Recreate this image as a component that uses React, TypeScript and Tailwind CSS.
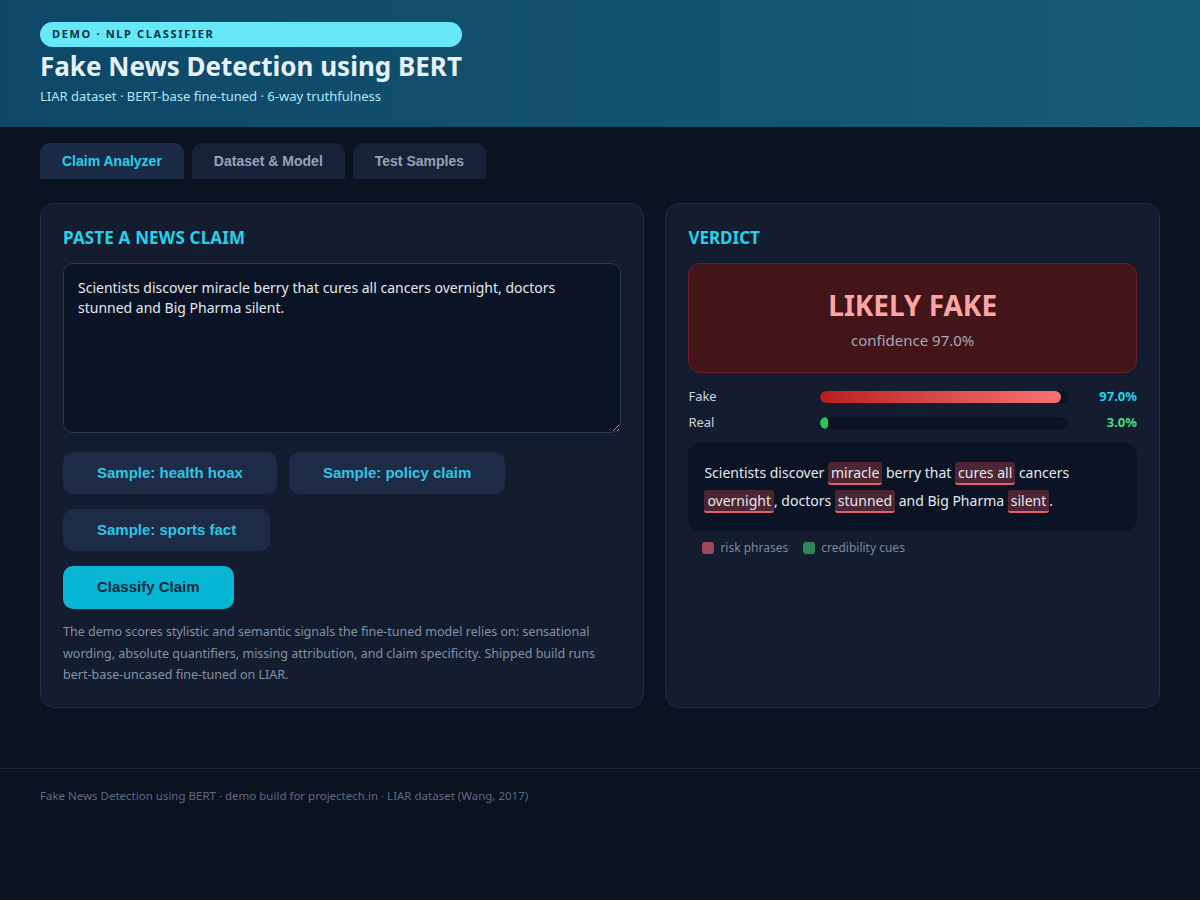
import React, { useState } from 'react';

type Segment = { text: string; risk?: boolean };

const claimText =
    'Scientists discover miracle berry that cures all cancers overnight, doctors stunned and Big Pharma silent.';

const highlighted: Segment[] = [
    { text: 'Scientists discover ' },
    { text: 'miracle', risk: true },
    { text: ' berry that ' },
    { text: 'cures all', risk: true },
    { text: ' cancers ' },
    { text: 'overnight', risk: true },
    { text: ', doctors ' },
    { text: 'stunned', risk: true },
    { text: ' and Big Pharma ' },
    { text: 'silent', risk: true },
    { text: '.' },
];

const tabs = ['Claim Analyzer', 'Dataset & Model', 'Test Samples'];
const samples = ['Sample: health hoax', 'Sample: policy claim', 'Sample: sports fact'];

const ScoreBar: React.FC<{ label: string; value: number; fill: string; pctColor: string }> = ({ label, value, fill, pctColor }) => (
    <div className="flex items-center h-[26px]">
        <div className="w-[132px] text-[13px] text-[#cbd5e1]">{label}</div>
        <div className="flex-1 h-3 rounded-full bg-[#0b1424] overflow-hidden">
            <div className={`h-full rounded-full ${fill}`} style={{ width: `${value}%` }} />
        </div>
        <div className={`w-[69px] text-right text-[13px] font-bold ${pctColor}`}>{value.toFixed(1)}%</div>
    </div>
);

export default function App() {
    const [active, setActive] = useState(0);
    const [claim, setClaim] = useState(claimText);

    return (
        <div className="min-h-[900px] bg-[#0b1220] font-['Noto_Sans',sans-serif] text-[#e2e8f0]">
            {/* header banner */}
            <header className="h-[127px] bg-gradient-to-r from-[#0e4767] to-[#175c76] px-10 pt-[22px] flex items-start">
                <div className="flex flex-col">
                    <div className="h-[25px] rounded-full bg-[#67e8f9] px-3 flex items-center text-[11px] font-bold tracking-[0.15em] text-[#0c2f40]">
                        DEMO · NLP CLASSIFIER
                    </div>
                    <h1 className="mt-[2px] text-[26px] leading-[34px] font-bold text-[#e6f1f7]">Fake News Detection using BERT</h1>
                    <p className="mt-[3px] text-[13px] leading-5 text-[#b3e5f5]">LIAR dataset · BERT-base fine-tuned · 6-way truthfulness</p>
                </div>
            </header>

            <main className="px-10 pt-4 pb-[60px]">
                {/* tabs */}
                <div className="flex gap-2">
                    {tabs.map((t, i) => (
                        <button
                            key={t}
                            onClick={() => setActive(i)}
                            className={`h-9 px-[22px] rounded-t-[10px] font-['Liberation_Sans',sans-serif] text-[14px] font-bold ${
                                i === active ? 'bg-[#1c2b45] text-[#22d3ee]' : 'bg-[#172238] text-[#94a3b8]'
                            }`}
                        >
                            {t}
                        </button>
                    ))}
                </div>

                <div className="mt-6 grid grid-cols-[1.222fr_1fr] gap-[21px]">
                    {/* claim input */}
                    <section className="rounded-[14px] border border-[#1f2c44] bg-[#131d2f] px-[22px] pt-[22px] pb-[21px]">
                        <h2 className="text-[17px] tracking-[0.01em] font-bold uppercase text-[#22d3ee] leading-6">Paste a news claim</h2>
                        <textarea
                            value={claim}
                            onChange={e => setClaim(e.target.value)}
                            className="mt-[13px] block w-full h-[170px] rounded-[10px] border border-[#2a3a57] bg-[#0b1424] px-[14px] pt-[14px] pb-[12px] text-[14px] leading-5 text-[#e2e8f0] outline-none"
                        />
                        <div className="mt-[19px] flex flex-wrap gap-x-[12px] gap-y-[15px]">
                            {samples.map(s => (
                                <button
                                    key={s}
                                    className="h-[42px] px-[34px] rounded-[10px] bg-[#1e2b46] font-['Liberation_Sans',sans-serif] text-[15px] font-bold text-[#2cc6e3]"
                                >
                                    {s}
                                </button>
                            ))}
                        </div>
                        <button className="mt-[15px] h-[43px] px-[34px] rounded-[10px] bg-[#06b6d4] font-['Liberation_Sans',sans-serif] text-[15px] font-bold text-[#0c2a3c]">
                            Classify Claim
                        </button>
                        <p className="mt-[12px] text-[12.5px] leading-[21.5px] text-[#8391a5]">
                            The demo scores stylistic and semantic signals the fine-tuned model relies on: sensational wording, absolute quantifiers, missing attribution, and claim specificity. Shipped build runs bert-base-uncased fine-tuned on LIAR.
                        </p>
                    </section>

                    {/* verdict */}
                    <section className="rounded-[14px] border border-[#1f2c44] bg-[#131d2f] px-[22px] pt-[22px] pb-[22px]">
                        <h2 className="text-[17px] font-bold uppercase text-[#22d3ee] leading-6">Verdict</h2>
                        <div className="mt-[13px] h-[110px] rounded-[12px] border border-[#6e1c22] bg-[#431519] pt-[23px] flex flex-col items-center">
                            <div className="text-[28px] leading-9 font-bold text-[#fca5a5]">LIKELY FAKE</div>
                            <div className="mt-[7px] text-[15px] leading-5 text-[#a3aab6]">confidence 97.0%</div>
                        </div>
                        <div className="mt-[11px]">
                            <ScoreBar label="Fake" value={97} fill="bg-gradient-to-r from-[#b91c1c] to-[#f87171]" pctColor="text-[#22d3ee]" />
                            <ScoreBar label="Real" value={3} fill="bg-[#22c55e]" pctColor="text-[#4ade80]" />
                        </div>
                        <div className="mt-[7px] rounded-[12px] bg-[#0b1424] px-4 py-[16px] text-[14px] leading-[28px] text-[#e2e8f0]">
                            {highlighted.map((seg, i) =>
                                seg.risk ? (
                                    <span key={i} className="rounded-[3px] border-b-2 border-[#e0606e] bg-[#4d2533] px-[3px] py-[1px]">
                                        {seg.text}
                                    </span>
                                ) : (
                                    <span key={i}>{seg.text}</span>
                                )
                            )}
                        </div>
                        <div className="mt-[8px] px-[14px] flex items-center gap-[15px] text-[12px] text-[#7b889c]">
                            <span className="flex items-center gap-[6px]">
                                <span className="w-3 h-3 rounded-[3px] bg-[#9c4a5a]" /> risk phrases
                            </span>
                            <span className="flex items-center gap-[6px]">
                                <span className="w-3 h-3 rounded-[3px] bg-[#2f8659]" /> credibility cues
                            </span>
                        </div>
                    </section>
                </div>
            </main>

            <footer className="border-t border-[#1a2639] px-10 pt-[18px] text-[11.5px] text-[#5f6c80]">
                Fake News Detection using BERT · demo build for projectech.in · LIAR dataset (Wang, 2017)
            </footer>
        </div>
    );
}
